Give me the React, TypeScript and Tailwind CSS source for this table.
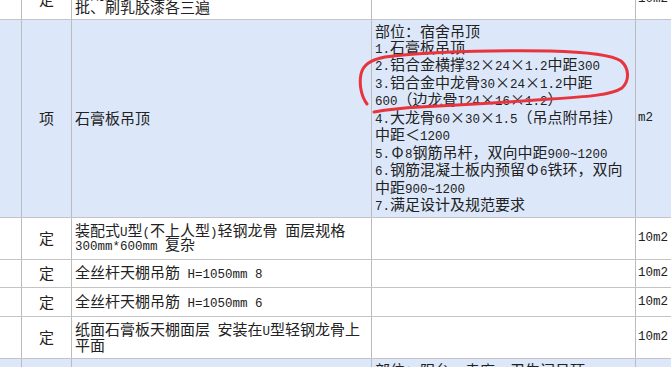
import React from "react";

function R({ s }: { s: string }) {
  const parts = s.split(/([\x20-\x7e]+|[×Φ])/).filter((p) => p !== "");
  return (
    <>
      {parts.map((p, i) =>
        /^[\x20-\x7e]+$/.test(p) ? (
          <span key={i} className="font-['Liberation_Mono',monospace] text-[12.5px] whitespace-pre">
            {p}
          </span>
        ) : /^[×Φ]$/.test(p) ? (
          <span key={i} className="inline-block w-[15px] text-center">
            {p}
          </span>
        ) : (
          <span key={i}>{p}</span>
        )
      )}
    </>
  );
}

const grid = "grid grid-cols-[21px_50px_300px_264px_1fr] border-b border-[#c4c4c4]";
const vl = "border-l border-[#bcbcbc]";

function Lines({ lines, lh }: { lines: string[]; lh: string }) {
  return (
    <div>
      {lines.map((l, i) => (
        <div key={i} className={`whitespace-nowrap ${lh} leading-[15px] flex items-center`}>
          <div>
            <R s={l} />
          </div>
        </div>
      ))}
    </div>
  );
}

function Row({
  h,
  code,
  name,
  unit,
}: {
  h: string;
  code: string;
  name: string[];
  unit: string;
}) {
  return (
    <div className={`${grid} ${h} bg-white`}>
      <div />
      <div className={`${vl} flex items-center justify-center`}>{code}</div>
      <div className={`${vl} flex items-center pl-[3px]`}>
        <Lines lines={name} lh="h-[14px]" />
      </div>
      <div className={vl} />
      <div className={`${vl} flex items-center pl-[2px]`}>
        <R s={unit} />
      </div>
    </div>
  );
}

function BlueRow({ h, name, desc, unit }: { h: string; name: string; desc: string[]; unit: string }) {
  return (
    <div className={`${grid} ${h} bg-[#dce8fa]`}>
      <div />
      <div className={`${vl} flex items-center justify-center`}>项</div>
      <div className={`${vl} flex items-center pl-[3px]`}>{name}</div>
      <div className={`${vl} pt-[2px] pl-[3px] overflow-hidden`}>
        <Lines lines={desc} lh="h-[17.5px]" />
      </div>
      <div className={`${vl} flex items-center pl-[2px]`}>
        <R s={unit} />
      </div>
    </div>
  );
}

export default function App() {
  return (
    <div className="relative h-[367px] w-[671px] overflow-hidden bg-white font-['Noto_Sans_CJK_SC',sans-serif] text-[15px] text-[#222]">
      <div className="-mt-[21px]">
        <Row h="h-[41px]" code="定" name={["满刮腻子两遍，", "批、刷乳胶漆各三遍"]} unit="10m2" />
        <BlueRow
          h="h-[198px]"
          name="石膏板吊顶"
          unit="m2"
          desc={[
            "部位：宿舍吊顶",
            "1.石膏板吊顶",
            "2.铝合金横撑32×24×1.2中距300",
            "3.铝合金中龙骨30×24×1.2中距",
            "600（边龙骨I24×16×1.2）",
            "4.大龙骨60×30×1.5（吊点附吊挂）",
            "中距＜1200",
            "5.Φ8钢筋吊杆，双向中距900~1200",
            "6.钢筋混凝土板内预留Φ6铁环，双向",
            "中距900~1200",
            "7.满足设计及规范要求",
          ]}
        />
        <Row h="h-[42px]" code="定" name={["装配式U型(不上人型)轻钢龙骨 面层规格", "300mm*600mm 复杂"]} unit="10m2" />
        <Row h="h-[28px]" code="定" name={["全丝杆天棚吊筋 H=1050mm 8"]} unit="10m2" />
        <Row h="h-[29px]" code="定" name={["全丝杆天棚吊筋 H=1050mm 6"]} unit="10m2" />
        <Row h="h-[42px]" code="定" name={["纸面石膏板天棚面层 安装在U型轻钢龙骨上", "平面"]} unit="10m2" />
        <BlueRow
          h="h-[198px]"
          name="石膏板吊顶"
          unit="m2"
          desc={[
            "部位：阳台、走廊、卫生间吊顶",
            "1.石膏板吊顶",
            "2.铝合金横撑32×24×1.2中距300",
          ]}
        />
      </div>
      <svg
        className="pointer-events-none absolute left-0 top-0"
        width="671"
        height="367"
        viewBox="0 0 671 367"
      >
        <path
          d="M 367 104 C 361 96, 359 84, 361 74 C 363 65, 370 60, 385 57 C 420 53, 470 50, 550 51 C 590 52, 612 55, 621 61 C 629 68, 630 80, 622 88 C 612 95, 585 97, 550 99 C 510 102, 460 105, 420 107 C 400 108, 385 110, 374 112"
          fill="none"
          stroke="#e8343c"
          strokeWidth="3"
          strokeLinecap="round"
        />
      </svg>
    </div>
  );
}
